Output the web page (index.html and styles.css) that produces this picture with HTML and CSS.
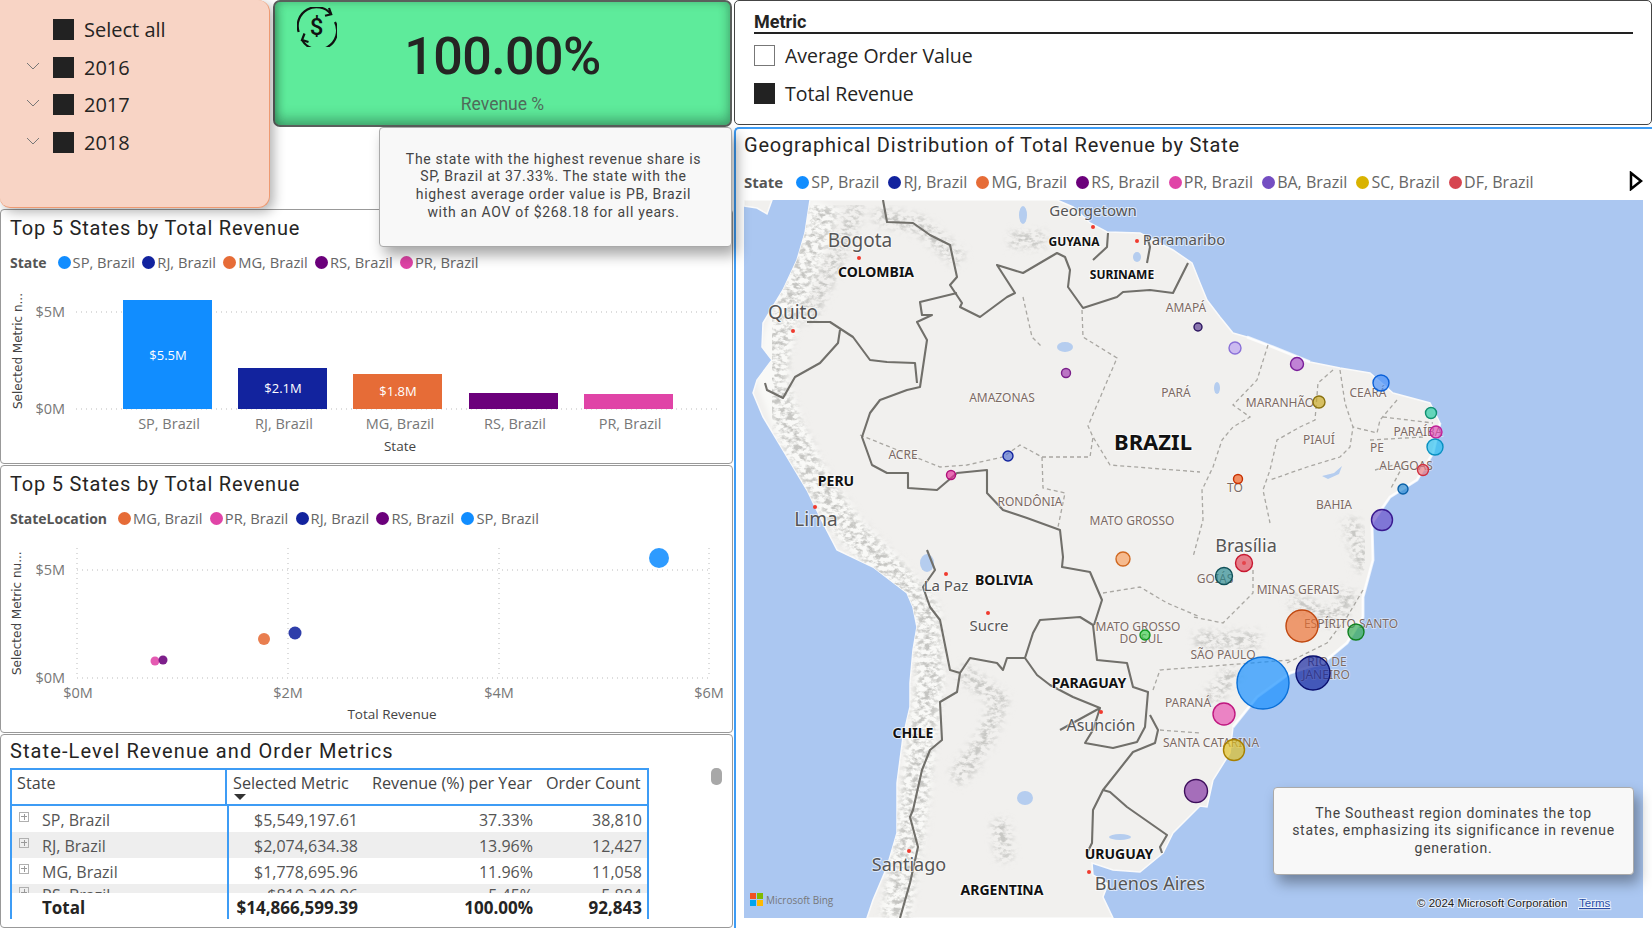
FILE: index.html
```html
<!DOCTYPE html>
<html lang="en">
<head>
    <meta charset="UTF-8">
    <title>Revenue Dashboard</title>
    <link rel="stylesheet" href="styles.css">
</head>
<body>
    <div class="page">
        <div class="left-col">
            <div class="top-row">
                <div class="slicer">
                    <div class="slicer-row"><span class="chev"></span><span class="check on"></span><span>Select all</span></div>
                    <div class="slicer-row"><svg class="chev" viewBox="0 0 14 8"><path d="M1 1l6 6 6-6" /></svg><span class="check on"></span><span>2016</span></div>
                    <div class="slicer-row"><svg class="chev" viewBox="0 0 14 8"><path d="M1 1l6 6 6-6" /></svg><span class="check on"></span><span>2017</span></div>
                    <div class="slicer-row"><svg class="chev" viewBox="0 0 14 8"><path d="M1 1l6 6 6-6" /></svg><span class="check on"></span><span>2018</span></div>
                </div>
                <div class="kpi">
                    <svg class="kpi-icon" viewBox="0 0 40 40">
                        <path d="M1.7 25A18.8 18.8 0 0 1 34 7" />
                        <path d="M38 15A18.8 18.8 0 0 1 5 33" />
                        <path d="M32 1l2.2 6.2-6.2 1.6" />
                        <path d="M7.5 26.5L5 33l6.5 2" />
                        <text x="19.5" y="28" class="kpi-dollar">$</text>
                    </svg>
                    <div class="kpi-value">100.00%</div>
                    <div class="kpi-label">Revenue %</div>
                </div>
            </div>
            <div class="note note-top">The state with the highest revenue share is SP, Brazil at 37.33%. The state with the highest average order value is PB, Brazil with an AOV of $268.18 for all years.</div>

            <div class="panel chart-one">
                <div class="panel-title">Top 5 States by Total Revenue</div>
                <div class="legend">
                    <b>State</b>
                    <span><i class="c-sp"></i>SP, Brazil</span>
                    <span><i class="c-rj"></i>RJ, Brazil</span>
                    <span><i class="c-mg"></i>MG, Brazil</span>
                    <span><i class="c-rs"></i>RS, Brazil</span>
                    <span><i class="c-pr"></i>PR, Brazil</span>
                </div>
                <svg class="chart" viewBox="1 275 731 188">
                    <path class="grid" d="M76 312H718M76 409H718" />
                    <rect x="123" y="300" width="89" height="109" fill="#118dff" />
                    <rect x="238" y="368" width="89" height="41" fill="#12239e" />
                    <rect x="353" y="374" width="89" height="35" fill="#e66c37" />
                    <rect x="469" y="393" width="89" height="16" fill="#6b007b" />
                    <rect x="584" y="394" width="89" height="15" fill="#e044a7" />
                    <text class="bar-val" x="168" y="360">$5.5M</text>
                    <text class="bar-val" x="283" y="393">$2.1M</text>
                    <text class="bar-val" x="398" y="396">$1.8M</text>
                    <text class="tick end" x="65" y="317">$5M</text>
                    <text class="tick end" x="65" y="414">$0M</text>
                    <text class="tick mid" x="169" y="429">SP, Brazil</text>
                    <text class="tick mid" x="284" y="429">RJ, Brazil</text>
                    <text class="tick mid" x="400" y="429">MG, Brazil</text>
                    <text class="tick mid" x="515" y="429">RS, Brazil</text>
                    <text class="tick mid" x="630" y="429">PR, Brazil</text>
                    <text class="axis mid" x="400" y="451">State</text>
                    <text class="axis-y" transform="translate(22 409) rotate(-90)">Selected Metric n...</text>
                </svg>
            </div>

            <div class="panel chart-two">
                <div class="panel-title">Top 5 States by Total Revenue</div>
                <div class="legend">
                    <b>StateLocation</b>
                    <span><i class="c-mg"></i>MG, Brazil</span>
                    <span><i class="c-pr"></i>PR, Brazil</span>
                    <span><i class="c-rj"></i>RJ, Brazil</span>
                    <span><i class="c-rs"></i>RS, Brazil</span>
                    <span><i class="c-sp"></i>SP, Brazil</span>
                </div>
                <svg class="chart" viewBox="2 533 731 199">
                    <path class="grid" d="M78 570H710M78 678H710M78 548V678M289 548V678M500 548V678M710 548V678" />
                    <circle cx="660" cy="558" r="10" fill="#118dff" opacity=".88" />
                    <circle cx="296" cy="633" r="6.5" fill="#12239e" opacity=".88" />
                    <circle cx="265" cy="639" r="6" fill="#e66c37" opacity=".88" />
                    <circle cx="156" cy="661" r="4.5" fill="#e044a7" opacity=".88" />
                    <circle cx="164" cy="660" r="4.5" fill="#6b007b" opacity=".88" />
                    <text class="tick end" x="66" y="575">$5M</text>
                    <text class="tick end" x="66" y="683">$0M</text>
                    <text class="tick mid" x="79" y="698">$0M</text>
                    <text class="tick mid" x="289" y="698">$2M</text>
                    <text class="tick mid" x="500" y="698">$4M</text>
                    <text class="tick mid" x="710" y="698">$6M</text>
                    <text class="axis mid" x="393" y="719">Total Revenue</text>
                    <text class="axis-y" transform="translate(22 675) rotate(-90)">Selected Metric nu...</text>
                </svg>
            </div>

            <div class="panel table-panel">
                <div class="panel-title">State-Level Revenue and Order Metrics</div>
                <div class="table">
                    <div class="t-row t-head">
                        <span>State</span>
                        <span class="sorted">Selected Metric</span>
                        <span>Revenue (%) per Year</span>
                        <span>Order Count</span>
                    </div>
                    <div class="t-row"><span class="name"><i class="plus"></i>SP, Brazil</span><span>$5,549,197.61</span><span>37.33%</span><span>38,810</span></div>
                    <div class="t-row alt"><span class="name"><i class="plus"></i>RJ, Brazil</span><span>$2,074,634.38</span><span>13.96%</span><span>12,427</span></div>
                    <div class="t-row"><span class="name"><i class="plus"></i>MG, Brazil</span><span>$1,778,695.96</span><span>11.96%</span><span>11,058</span></div>
                    <div class="t-row alt cut"><span class="name"><i class="plus"></i>RS, Brazil</span><span>$810,240.96</span><span>5.45%</span><span>5,884</span></div>
                    <div class="t-row t-total"><span class="name">Total</span><span>$14,866,599.39</span><span>100.00%</span><span>92,843</span></div>
                </div>
                <div class="scroll-thumb"></div>
            </div>
        </div>

        <div class="right-col">
            <div class="metric-panel">
                <div class="metric-head">Metric</div>
                <div class="metric-row"><span class="check"></span>Average Order Value</div>
                <div class="metric-row"><span class="check on"></span>Total Revenue</div>
            </div>
            <div class="map-panel">
                <div class="panel-title">Geographical Distribution of Total Revenue by State</div>
                <div class="legend map-legend">
                    <b>State</b>
                    <span><i class="c-sp"></i>SP, Brazil</span>
                    <span><i class="c-rj"></i>RJ, Brazil</span>
                    <span><i class="c-mg"></i>MG, Brazil</span>
                    <span><i class="c-rs"></i>RS, Brazil</span>
                    <span><i class="c-pr"></i>PR, Brazil</span>
                    <span><i class="c-ba"></i>BA, Brazil</span>
                    <span><i class="c-sc"></i>SC, Brazil</span>
                    <span><i class="c-df"></i>DF, Brazil</span>
                    <svg class="legend-next" viewBox="0 0 14 20"><path d="M2 2l10 8-10 8z" /></svg>
                </div>
                <div class="map">
                    <svg viewBox="744 200 899 718">
                        <defs>
                            <filter id="speck" x="0" y="0" width="100%" height="100%">
                                <feGaussianBlur in="SourceAlpha" stdDeviation="4" result="edge" />
                                <feTurbulence type="fractalNoise" baseFrequency="0.16 0.24" numOctaves="3" seed="7" />
                                <feColorMatrix values="0 0 0 0 .56  0 0 0 0 .56  0 0 0 0 .54  3.6 0 0 0 -1.5" />
                                <feGaussianBlur stdDeviation="0.4" />
                                <feComposite in2="edge" operator="in" />
                            </filter>
                            <filter id="soft"><feGaussianBlur stdDeviation="0.45" /></filter>
                            <filter id="wide"><feGaussianBlur stdDeviation="2.5" /></filter>
                            <clipPath id="land-clip">
                                <path d="M810 200L805 233 797 260 783 290 763 323 762 347 772 360 757 380 753 393 763 417 783 450 807 490 823 523 837 550 873 567 907 593 913 607 917 627 913 650 910 683 910 707 903 737 897 783 897 833 887 867 873 900 867 918H1113L1103 897 1108 884 1093 875 1092 863 1113 870 1140 872 1163 853 1173 833 1200 806 1207 807 1213 780 1230 753 1233 727 1257 697 1290 673 1323 663 1347 643 1363 617 1363 597 1373 560 1372 523 1390 497 1417 480 1433 453 1440 423 1430 403 1393 393 1370 373 1340 368 1310 362 1273 347 1247 337 1233 333 1220 317 1207 300 1200 283 1192 263 1173 250 1140 233 1107 232 1090 223 1073 207 1057 200Z" />
                            </clipPath>
                        </defs>
                        <rect x="744" y="200" width="899" height="718" fill="#abc7f1" />
                        <!-- land -->
                        <path class="land" d="M810 200L805 233 797 260 783 290 763 323 762 347 772 360 757 380 753 393 763 417 783 450 807 490 823 523 837 550 873 567 907 593 913 607 917 627 913 650 910 683 910 707 903 737 897 783 897 833 887 867 873 900 867 918H1113L1103 897 1108 884 1093 875 1092 863 1113 870 1140 872 1163 853 1173 833 1200 806 1207 807 1213 780 1230 753 1233 727 1257 697 1290 673 1323 663 1347 643 1363 617 1363 597 1373 560 1372 523 1390 497 1417 480 1433 453 1440 423 1430 403 1393 393 1370 373 1340 368 1310 362 1273 347 1247 337 1233 333 1220 317 1207 300 1200 283 1192 263 1173 250 1140 233 1107 232 1090 223 1073 207 1057 200Z" />
                        <path class="land" d="M744 200H772L767 214 757 208 744 206Z" />
                        <!-- mountain relief -->
                        <g clip-path="url(#land-clip)">
                            <path class="relief-base" filter="url(#wide)" d="M826 205L806 262 790 302 778 340 772 380 790 430 815 480 850 530 890 570 925 610 930 680 920 750 912 820 895 918" />
                            <g filter="url(#speck)">
                                <path class="relief" d="M826 205L806 262 790 302 778 340 772 380 790 430 815 480 850 530 890 570 925 610 930 680 920 750 912 820 895 918" />
                                <path class="relief thin" d="M858 205L830 270 806 320M875 215L920 225 960 260M1010 240L1045 240M960 670L1000 700 985 740 960 770M955 780L975 760M1000 820L1005 860M1290 600L1335 620 1350 590M1195 640L1260 640M1210 700L1235 670M1350 520L1365 570" />
                            </g>
                        </g>
                        <path class="coast-glow" d="M1233 727L1257 697 1290 673 1323 663 1347 643 1363 617 1363 597 1373 560 1372 523 1390 497 1417 480 1433 453 1440 423M1247 337L1273 347 1310 362" />
                        <!-- lakes -->
                        <g class="lake" filter="url(#soft)">
                            <ellipse cx="1065" cy="347" rx="8" ry="5" />
                            <ellipse cx="1023" cy="215" rx="4" ry="9" />
                            <ellipse cx="1137" cy="257" rx="4" ry="5" />
                            <ellipse cx="1025" cy="798" rx="8" ry="7" />
                            <ellipse cx="927" cy="563" rx="7" ry="9" />
                            <ellipse cx="1120" cy="837" rx="11" ry="3" />
                            <ellipse cx="1217" cy="388" rx="3" ry="6" />
                            <path d="M1322 476l12-3 8-7-3 8-11 5z" />
                        </g>
                        <g filter="url(#soft)">
                            <!-- dashed state lines -->
                            <g class="state">
                                <path d="M1023 297L1032 337 1042 347M1082 310L1083 337 1117 358 1088 426 1093 437 1110 465 1200 472" />
                                <path d="M860 435L940 467 967 465 1003 457 1020 445 1042 457 1090 457 1093 437M1042 457L1043 488 1065 493 1058 527" />
                                <path d="M1268 345L1257 380 1233 405 1250 417 1233 427 1222 440 1213 467 1202 490 1203 520 1193 557" />
                                <path d="M1333 370L1318 383 1315 420 1300 427 1277 440 1270 470 1263 490 1270 523M1340 370L1345 403 1353 427 1350 447 1340 457 1307 467 1270 480" />
                                <path d="M1397 400L1380 420 1377 433 1353 427M1383 417L1433 423M1370 440L1423 437M1375 470L1405 462 1390 490" />
                                <path d="M1103 593L1140 587 1167 603 1200 617M1153 690L1160 670 1200 667 1290 660M1160 730L1200 733M1253 570L1253 593 1223 623 1193 617M1363 590L1347 617 1327 643 1287 663" />
                            </g>
                            <!-- country borders -->
                            <g class="border">
                                <path d="M883 200L887 222 913 223 930 235 950 245 957 277 950 285 962 303 960 307 980 317 1007 297 1015 293 997 265 1023 273 1057 253 1065 257 1070 270 1068 287 1083 308 1117 297 1123 292 1150 290 1173 293 1188 263" />
                                <path d="M957 293L920 302 922 315 932 315 917 322 927 340 920 387 907 390 880 400 870 413 862 437 872 465 887 473 908 473 908 488 937 490 957 473 987 470 987 493 1003 510 1027 518 1060 530 1063 557 1062 567 1090 572 1102 600 1094 625" />
                                <path d="M807 322L830 322 853 337 870 360 887 362 915 363 917 383M840 330L838 343 820 363 795 377 783 398 767 390 765 383" />
                                <path d="M927 550L935 570 923 587 930 607 940 620 950 670 960 673 970 658 997 663 1003 670 1007 658 1025 658 1037 675 1050 685 1073 697 1100 708 1060 730M1025 658L1033 633 1040 620 1080 617 1093 625 1097 660 1127 663 1133 687 1148 692 1145 727 1137 742 1113 748 1085 743 1093 730 1100 708" />
                                <path d="M960 673L957 692 940 702 942 740 930 750 922 770 913 810 910 817 918 847 910 883 900 918" />
                                <path d="M1150 715L1158 730 1155 743 1133 752 1103 790 1110 792 1127 807 1167 835 1160 847 1162 853M1103 790L1093 810 1092 843 1087 853" />
                                <path d="M1093 260L1107 247 1108 233M1147 263L1150 247 1147 236" />
                            </g>
                        </g>
                        <!-- capitals -->
                        <g fill="#f03a2e">
                            <circle cx="1093" cy="227" r="2" /><circle cx="1137" cy="241" r="2" /><circle cx="859" cy="258" r="2" />
                            <circle cx="793" cy="331" r="2" /><circle cx="815" cy="507" r="2" /><circle cx="946" cy="574" r="2" />
                            <circle cx="988" cy="613" r="2" /><circle cx="1101" cy="712" r="2" /><circle cx="909" cy="851" r="2" />
                            <circle cx="1089" cy="872" r="2" /><circle cx="1244" cy="563" r="2" />
                        </g>
                        <!-- labels -->
                        <g class="city">
                            <text x="1093" y="216" font-size="15">Georgetown</text>
                            <text x="1184" y="245" font-size="15">Paramaribo</text>
                            <text x="860" y="247" font-size="19">Bogota</text>
                            <text x="793" y="319" font-size="19">Quito</text>
                            <text x="816" y="526" font-size="19">Lima</text>
                            <text x="1246" y="552" font-size="18">Brasília</text>
                            <text x="946" y="591" font-size="15">La Paz</text>
                            <text x="989" y="631" font-size="15">Sucre</text>
                            <text x="1101" y="731" font-size="16">Asunción</text>
                            <text x="909" y="871" font-size="18">Santiago</text>
                            <text x="1150" y="890" font-size="18">Buenos Aires</text>
                        </g>
                        <g class="country">
                            <text x="876" y="277" font-size="14">COLOMBIA</text>
                            <text x="1074" y="246" font-size="12">GUYANA</text>
                            <text x="1122" y="279" font-size="12">SURINAME</text>
                            <text x="1153" y="450" font-size="22">BRAZIL</text>
                            <text x="836" y="486" font-size="14">PERU</text>
                            <text x="1004" y="585" font-size="14">BOLIVIA</text>
                            <text x="1089" y="688" font-size="14">PARAGUAY</text>
                            <text x="913" y="738" font-size="14">CHILE</text>
                            <text x="1119" y="859" font-size="14">URUGUAY</text>
                            <text x="1002" y="895" font-size="14">ARGENTINA</text>
                        </g>
                        <g class="region">
                            <text x="1186" y="312">AMAPÁ</text>
                            <text x="1002" y="402">AMAZONAS</text>
                            <text x="1176" y="397">PARÁ</text>
                            <text x="903" y="459">ACRE</text>
                            <text x="1030" y="506">RONDÔNIA</text>
                            <text x="1132" y="525">MATO GROSSO</text>
                            <text x="1280" y="407">MARANHÃO</text>
                            <text x="1368" y="397">CEARÁ</text>
                            <text x="1319" y="444">PIAUÍ</text>
                            <text x="1418" y="436">PARAÍBA</text>
                            <text x="1377" y="452">PE</text>
                            <text x="1406" y="470">ALAGOAS</text>
                            <text x="1235" y="492">TO</text>
                            <text x="1334" y="509">BAHIA</text>
                            <text x="1138" y="631">MATO GROSSO</text>
                            <text x="1141" y="643">DO SUL</text>
                            <text x="1188" y="707">PARANÁ</text>
                            <text x="1211" y="747">SANTA CATARINA</text>
                            <text x="1215" y="583">GOIÁS</text>
                            <text x="1298" y="594">MINAS GERAIS</text>
                            <text x="1351" y="628">ESPÍRITO SANTO</text>
                            <text x="1223" y="659">SÃO PAULO</text>
                            <text x="1327" y="666">RIO DE</text>
                            <text x="1326" y="679">JANEIRO</text>
                        </g>
                        <!-- bubbles -->
                        <g class="bubbles">
                            <circle cx="1066" cy="373" r="4.5" fill="#a13bb0" stroke="#7a1f8a" />
                            <circle cx="1008" cy="456" r="5" fill="#5470d0" stroke="#12239e" />
                            <circle cx="951" cy="475" r="4.5" fill="#e5309a" stroke="#b0107a" />
                            <circle cx="1198" cy="327" r="4" fill="#5a3d90" stroke="#2c1560" />
                            <circle cx="1235" cy="348" r="6" fill="#b8a0f0" stroke="#8a70d8" />
                            <circle cx="1297" cy="364" r="6.5" fill="#a850c8" stroke="#7a1f9a" />
                            <circle cx="1381" cy="383" r="8" fill="#4a90f8" stroke="#0a60d8" />
                            <circle cx="1319" cy="402" r="6" fill="#c8a820" stroke="#8a7210" />
                            <circle cx="1431" cy="413" r="5.5" fill="#20c8a0" stroke="#109070" />
                            <circle cx="1436" cy="432" r="6" fill="#e050b8" stroke="#c02098" />
                            <circle cx="1435" cy="447" r="8" fill="#28c0f0" stroke="#0890c0" />
                            <circle cx="1423" cy="470" r="5.5" fill="#e87880" stroke="#d03040" />
                            <circle cx="1403" cy="489" r="5" fill="#2888d0" stroke="#0860a8" />
                            <circle cx="1238" cy="479" r="4.5" fill="#f06020" stroke="#c83000" />
                            <circle cx="1382" cy="520" r="10.5" fill="#6a50c8" stroke="#3a1a90" />
                            <circle cx="1123" cy="559" r="7" fill="#f8a060" stroke="#d06820" />
                            <circle cx="1145" cy="635" r="5" fill="#40d050" stroke="#109820" />
                            <circle cx="1196" cy="791" r="11.5" fill="#8030a0" stroke="#3e0f5c" />
                            <circle cx="1244" cy="563" r="8.5" fill="#e04858" stroke="#c81830" />
                            <circle cx="1224" cy="576" r="8.5" fill="#2a8a90" stroke="#105058" />
                            <circle cx="1302" cy="626" r="16" fill="#ec7030" stroke="#c04810" />
                            <circle cx="1356" cy="632" r="8" fill="#30a850" stroke="#108020" />
                            <circle cx="1263" cy="683" r="26" fill="#118dff" stroke="#0a70d8" />
                            <circle cx="1313" cy="673" r="17" fill="#12239e" stroke="#0a1070" />
                            <circle cx="1224" cy="714" r="11" fill="#e850b0" stroke="#c01880" />
                            <circle cx="1234" cy="750" r="10.5" fill="#e0c020" stroke="#a88000" />
                        </g>
                        <!-- bing logo -->
                        <rect x="750" y="893" width="6" height="6" fill="#f25022" />
                        <rect x="757" y="893" width="6" height="6" fill="#7fba00" />
                        <rect x="750" y="900" width="6" height="6" fill="#00a4ef" />
                        <rect x="757" y="900" width="6" height="6" fill="#ffb900" />
                        <text class="bing" x="766" y="904">Microsoft Bing</text>
                        <text class="copy" x="1417" y="907">© 2024 Microsoft Corporation</text>
                        <text class="terms" x="1579" y="907">Terms</text>
                    </svg>
                    <div class="note note-map"><span>The Southeast region dominates the top<br>states, emphasizing its significance in revenue<br>generation.</span></div>
                </div>
            </div>
        </div>
    </div>
</body>
</html>
```

FILE: styles.css
```css
* {
    box-sizing: border-box;
}
html, body {
    margin: 0;
    height: 100%;
    overflow: hidden;
    background-color: #fff;
}
body {
    font-family: "Open Sans", "Noto Sans", sans-serif;
    color: #252423;
}
.page {
    display: grid;
    grid-template-columns: 733px 1fr;
    column-gap: 1px;
    height: 928px;
}
.left-col {
    position: relative;
    display: flex;
    flex-direction: column;
    gap: 1px;
}
.top-row {
    display: flex;
    gap: 3px;
    height: 208px;
}

/* year slicer */
.slicer {
    width: 270px;
    padding-top: 10.5px;
    background-color: #f8d4c5;
    border: 1px solid #ee9a72;
    border-top: 0;
    border-left: 0;
    border-radius: 0 12px 12px 10px;
    box-shadow: 4px 4px 12px rgba(0, 0, 0, 0.3);
    z-index: 1;
}
.slicer-row {
    display: flex;
    align-items: center;
    height: 37.7px;
    padding-left: 26px;
    font-size: 20px;
    color: #252423;
}
.chev {
    width: 14px;
    height: 8px;
    margin-right: 13px;
    margin-top: -3px;
    fill: none;
    stroke: #777;
    stroke-width: 1;
}
.check {
    flex: none;
    width: 21px;
    height: 21px;
    margin-right: 10px;
    background-color: #fff;
    border: 1px solid #777;
}
.check.on {
    background-color: #222;
    border-color: #222;
}

/* kpi card */
.kpi {
    position: relative;
    width: 459px;
    height: 127px;
    text-align: center;
    background-color: #5eeb9b;
    border: 2px solid #5a5f5c;
    border-radius: 7px;
    box-shadow: inset 0 -8px 12px rgba(30, 80, 55, 0.3), inset 0 0 10px rgba(40, 90, 60, 0.35);
}
.kpi-icon {
    position: absolute;
    left: 22px;
    top: 5px;
    width: 40px;
    height: 40px;
    fill: none;
    stroke: #111;
    stroke-width: 2.2;
}
.kpi-dollar {
    font-family: "Roboto", sans-serif;
    font-size: 24px;
    font-weight: 500;
    text-anchor: middle;
    fill: #111;
    stroke: none;
}
.kpi-value {
    margin-top: 25px;
    font-family: "Roboto", sans-serif;
    font-size: 52px;
    font-weight: 500;
    letter-spacing: -0.6px;
    line-height: 60px;
    color: #252423;
}
.kpi-label {
    margin-top: 7px;
    font-family: "Roboto", sans-serif;
    font-size: 17.5px;
    color: #4f6b5a;
}

/* text boxes laid over the charts */
.note {
    position: absolute;
    display: flex;
    align-items: center;
    justify-content: center;
    text-align: center;
    font-family: "Roboto", sans-serif;
    font-size: 14px;
    letter-spacing: 0.7px;
    line-height: 17.6px;
    color: #444;
    background-color: #f8f8f8;
    border: 1px solid #aaa;
    border-radius: 4px;
    box-shadow: 5px 8px 14px rgba(0, 0, 0, 0.35);
    z-index: 2;
}
.note-top {
    left: 379px;
    top: 127px;
    width: 353px;
    height: 120px;
    padding: 0 25px 2px 21px;
}
.note-map {
    right: 18px;
    top: 658px;
    width: 361px;
    height: 88px;
    padding: 0 10px;
    letter-spacing: 0.72px;
}

/* panels */
.panel {
    position: relative;
    background-color: #fff;
    border: 1px solid #999;
    border-radius: 4px;
    padding: 5px 0 0 9px;
}
.chart-one {
    height: 255px;
}
.chart-two {
    height: 268px;
}
.table-panel {
    flex: 1;
    padding-top: 3px;
}
.panel-title {
    font-family: "Roboto", sans-serif;
    font-size: 20px;
    line-height: 26px;
    letter-spacing: 0.8px;
    color: #252423;
}
.table-panel .panel-title {
    letter-spacing: 1.1px;
}
.legend {
    display: flex;
    align-items: center;
    height: 20px;
    margin-top: 11px;
    font-size: 14.7px;
    color: #666;
    white-space: nowrap;
}
.legend b {
    margin-right: 11px;
    font-size: 14px;
    color: #555;
}
.legend span {
    display: flex;
    align-items: center;
    margin-right: 7.3px;
}
.legend i {
    width: 13px;
    height: 13px;
    margin-right: 2px;
    border-radius: 50%;
}
.c-sp { background-color: #118dff; }
.c-rj { background-color: #12239e; }
.c-mg { background-color: #e66c37; }
.c-rs { background-color: #6b007b; }
.c-pr { background-color: #e044a7; }
.c-ba { background-color: #744ec2; }
.c-sc { background-color: #d9b300; }
.c-df { background-color: #d64550; }

/* svg charts */
.chart {
    position: absolute;
    left: 0;
    bottom: 0;
    width: 731px;
    display: block;
}
.chart-one .chart { height: 188px; }
.chart-two .chart { height: 199px; }
.grid {
    fill: none;
    stroke: #bbb;
    stroke-width: 1;
    stroke-dasharray: 1 4;
}
.tick {
    font-size: 14.5px;
    fill: #777;
}
.end { text-anchor: end; }
.mid { text-anchor: middle; }
.bar-val {
    font-size: 13px;
    fill: #fff;
    text-anchor: middle;
}
.axis {
    font-size: 13.5px;
    fill: #444;
}
.axis-y {
    font-family: "DejaVu Sans", sans-serif;
    font-size: 12px;
    fill: #444;
}

/* table */
.table {
    width: 639px;
    margin-top: 4px;
    border: 2px solid #3d9cf5;
    border-bottom: 0;
    font-size: 16px;
    color: #555;
}
.t-row {
    display: grid;
    grid-template-columns: 215px 136px 175px 1fr;
    height: 26px;
    padding-top: 1px;
    align-items: center;
    white-space: nowrap;
    background:
        linear-gradient(#3d9cf5, #3d9cf5) 215px 0 / 2px 100% no-repeat;
}
.t-row span {
    padding-right: 5px;
    text-align: right;
}
.t-row .name {
    padding-left: 30px;
    text-align: left;
    position: relative;
}
.alt {
    background-color: #eee;
}
.cut {
    height: 9px;
    padding-top: 0;
    overflow: hidden;
    align-items: start;
}
.t-head {
    height: 36px;
    padding-top: 2px;
    align-items: start;
    color: #444;
    font-size: 16.2px;
    border-bottom: 2px solid #3d9cf5;
    background: none;
}
.t-head span {
    text-align: left;
    padding-right: 0;
}
.t-head span:nth-child(1) {
    padding-left: 5px;
    height: 34px;
    margin-top: -2px;
    padding-top: 2px;
    border-right: 2px solid #3d9cf5;
}
.t-head span:nth-child(2) {
    padding-left: 6px;
}
.t-head span:nth-child(3) {
    padding-left: 9px;
}
.t-head span:nth-child(4) {
    padding-left: 8px;
}
.t-head .sorted {
    position: relative;
}
.sorted::after {
    content: "";
    position: absolute;
    left: 7px;
    top: 22px;
    border-style: solid;
    border-width: 6px 6px 0;
    border-color: #333 transparent transparent;
}
.t-total {
    padding-top: 3px;
    font-weight: 700;
    font-size: 17px;
    color: #252423;
}
.plus {
    position: absolute;
    left: 7px;
    top: 3px;
    width: 10px;
    height: 10px;
    border: 1px solid #b0b0b0;
    background:
        linear-gradient(#999, #999) center / 6px 1px no-repeat,
        linear-gradient(#999, #999) center / 1px 6px no-repeat;
}
.scroll-thumb {
    position: absolute;
    left: 710px;
    top: 33px;
    width: 11px;
    height: 17px;
    border-radius: 5px;
    background-color: #a8a8a8;
}

/* right column */
.right-col {
    display: flex;
    flex-direction: column;
    gap: 2px;
}
.metric-panel {
    height: 125px;
    padding: 10px 18px 0 19px;
    border: 1px solid #444;
    border-radius: 5px;
    font-size: 19.5px;
    color: #252423;
}
.metric-head {
    height: 23px;
    font-family: "Roboto", sans-serif;
    font-size: 18px;
    font-weight: 700;
    line-height: 22px;
    border-bottom: 2px solid #222;
}
.metric-row {
    display: flex;
    align-items: center;
    height: 38px;
}
.metric-row:nth-child(2) {
    margin-top: 2px;
}
.map-panel {
    flex: 1;
    position: relative;
    padding: 3px 0 0 8px;
    border: 2px solid #3d9cf5;
    border-right: 0;
    border-bottom: 0;
    border-radius: 5px 0 0 0;
}
.map-panel .panel-title {
    letter-spacing: 0.8px;
}
.map-legend {
    margin-top: 14px;
    font-size: 16px;
}
.map-legend b {
    margin-right: 13px;
    font-size: 15px;
}
.map-legend span {
    margin-right: 9.2px;
}
.legend-next {
    position: absolute;
    left: 893px;
    top: 42px;
    width: 14px;
    height: 20px;
    fill: #fff;
    stroke: #000;
    stroke-width: 2.5;
}
.map {
    margin-top: 8px;
    width: 899px;
    height: 718px;
}
.map svg {
    display: block;
    width: 899px;
    height: 718px;
}

/* map drawing */
.land {
    fill: #f1f0ee;
    stroke: #fafafa;
    stroke-width: 1.5;
}
.relief-base {
    fill: none;
    stroke: #f9f9f7;
    stroke-width: 30;
    stroke-linejoin: round;
}
.relief {
    fill: none;
    stroke: #000;
    stroke-width: 26;
    stroke-linejoin: round;
}
.relief.thin {
    stroke-width: 16;
}
.coast-glow {
    fill: none;
    stroke: #fff;
    stroke-width: 3;
    opacity: 0.7;
}
.lake {
    fill: #b5cdef;
}
.state {
    fill: none;
    stroke: #a9a7a2;
    stroke-width: 1.3;
    stroke-dasharray: 4 3;
}
.border {
    fill: none;
    stroke: #716f6b;
    stroke-width: 2.1;
    stroke-linejoin: round;
}
.city text {
    font-family: "Noto Sans", sans-serif;
    fill: #555;
    text-anchor: middle;
    paint-order: stroke;
    stroke: rgba(255, 255, 255, 0.6);
    stroke-width: 2px;
}
.country text {
    font-family: "Noto Sans", sans-serif;
    font-weight: 700;
    fill: #111;
    text-anchor: middle;
    paint-order: stroke;
    stroke: rgba(255, 255, 255, 0.7);
    stroke-width: 2px;
}
.region text {
    font-family: "Noto Sans", sans-serif;
    font-size: 12px;
    fill: #7c6a64;
    text-anchor: middle;
    paint-order: stroke;
    stroke: rgba(255, 255, 255, 0.5);
    stroke-width: 1.5px;
}
.bubbles circle {
    fill-opacity: 0.68;
    stroke-width: 1.4;
}
.bing {
    font-family: "Open Sans", sans-serif;
    font-size: 10px;
    fill: #77787a;
}
.copy, .terms {
    font-family: "Liberation Sans", sans-serif;
    font-size: 11.5px;
    fill: #222;
    paint-order: stroke;
    stroke: rgba(255, 255, 255, 0.7);
    stroke-width: 2px;
}
.terms {
    fill: #2a4fa8;
    text-decoration: underline;
}
```
